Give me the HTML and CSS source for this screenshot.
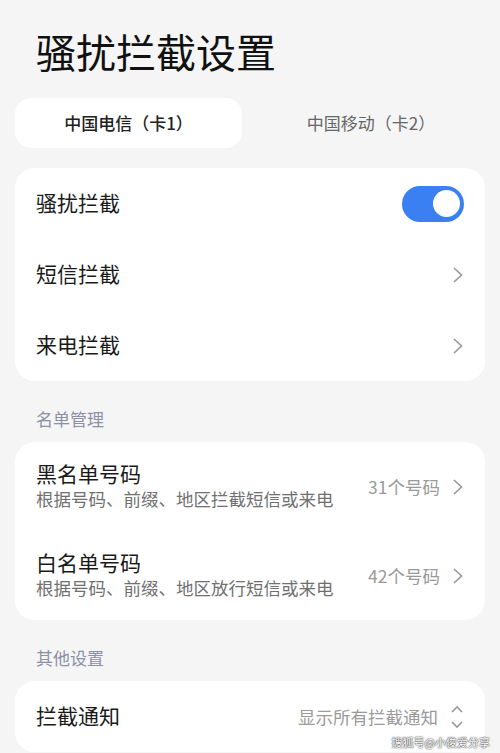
FILE: index.html
```html
<!DOCTYPE html>
<html lang="zh-CN">
<head>
<meta charset="UTF-8">
<meta name="viewport" content="width=device-width, initial-scale=1.0">
<title>骚扰拦截设置</title>
<link rel="stylesheet" href="styles.css">
</head>
<body>
    <div class="page">
        <h1 class="title">骚扰拦截设置</h1>

        <div class="tabs">
            <div class="tab active">中国电信（卡1）</div>
            <div class="tab">中国移动（卡2）</div>
        </div>

        <div class="card">
            <div class="row">
                <span class="row-name">骚扰拦截</span>
                <span class="switch on"><span class="knob"></span></span>
            </div>
            <div class="row">
                <span class="row-name">短信拦截</span>
                <svg class="arrow" viewBox="0 0 12 18"><path d="M2 2 L9.5 9 L2 16"/></svg>
            </div>
            <div class="row">
                <span class="row-name">来电拦截</span>
                <svg class="arrow" viewBox="0 0 12 18"><path d="M2 2 L9.5 9 L2 16"/></svg>
            </div>
        </div>

        <div class="section">名单管理</div>
        <div class="card">
            <div class="row tall">
                <div class="row-text">
                    <div class="row-name">黑名单号码</div>
                    <div class="row-desc">根据号码、前缀、地区拦截短信或来电</div>
                </div>
                <span class="row-value">31个号码</span>
                <svg class="arrow" viewBox="0 0 12 18"><path d="M2 2 L9.5 9 L2 16"/></svg>
            </div>
            <div class="row tall">
                <div class="row-text">
                    <div class="row-name">白名单号码</div>
                    <div class="row-desc">根据号码、前缀、地区放行短信或来电</div>
                </div>
                <span class="row-value">42个号码</span>
                <svg class="arrow" viewBox="0 0 12 18"><path d="M2 2 L9.5 9 L2 16"/></svg>
            </div>
        </div>

        <div class="section">其他设置</div>
        <div class="card">
            <div class="row">
                <span class="row-name">拦截通知</span>
                <span class="row-value">显示所有拦截通知</span>
                <svg class="updown" viewBox="0 0 14 26"><path d="M2 8 L7 3 L12 8"/><path d="M2 18 L7 23 L12 18"/></svg>
            </div>
        </div>
    </div>
    <div class="watermark">搜狐号@小俊爱分享</div>
</body>
</html>
```

FILE: styles.css
```css
body{
    margin: 0;
    background: #f5f5f5;
    font-family: "Noto Sans CJK SC", "Noto Sans", sans-serif;
    color: #1a1a1a;
    overflow: hidden;
}
.page{
    padding: 0 15px;
}
.title{
    margin: 0;
    padding: 27px 0 0 21px;
    font-size: 40px;
    font-weight: 400;
    line-height: 48px;
    color: #111;
}
.tabs{
    display: grid;
    grid-template-columns: 227px 1fr;
    gap: 15px;
    margin-top: 23px;
}
.tab{
    height: 50px;
    line-height: 50px;
    text-align: center;
    font-size: 17px;
    color: #666;
    border-radius: 16px;
}
.tab.active{
    background: #fff;
    color: #222;
    font-weight: 500;
}
.card{
    background: #fff;
    border-radius: 20px;
    margin-top: 20px;
}
.section + .card{
    margin-top: 11px;
}
.row{
    display: flex;
    align-items: center;
    height: 71px;
    padding: 0 21px;
}
.row.tall{
    height: 89px;
}
.row-name{
    font-size: 21px;
    line-height: 28px;
    margin-top: -3px;
}
.row-text{
    flex: 1;
}
.row > .row-name{
    flex: 1;
}
.row-desc{
    font-size: 17.5px;
    line-height: 24px;
    color: #707070;
}
.row-value{
    font-size: 17.5px;
    color: #9a9a9a;
    margin-right: 12px;
}
.arrow{
    width: 12px;
    height: 18px;
    fill: none;
    stroke: #9a9a9a;
    stroke-width: 1.7;
}
.updown{
    width: 14px;
    height: 26px;
    fill: none;
    stroke: #9a9a9a;
    stroke-width: 1.7;
}
.switch{
    width: 62px;
    height: 36px;
    border-radius: 18px;
    background: #3a80f2;
    display: flex;
    align-items: center;
    justify-content: flex-end;
    padding: 0 4px;
    box-sizing: border-box;
}
.knob{
    width: 27px;
    height: 27px;
    border-radius: 50%;
    background: #fff;
}
.section{
    margin: 26px 0 0 21px;
    font-size: 17px;
    line-height: 24px;
    color: #8c90a6;
}
.watermark{
    position: absolute;
    right: 10px;
    bottom: 3px;
    font-size: 11px;
    color: #fff;
    text-shadow: 0 0 2px #333, 0 0 1px #333;
}
```
